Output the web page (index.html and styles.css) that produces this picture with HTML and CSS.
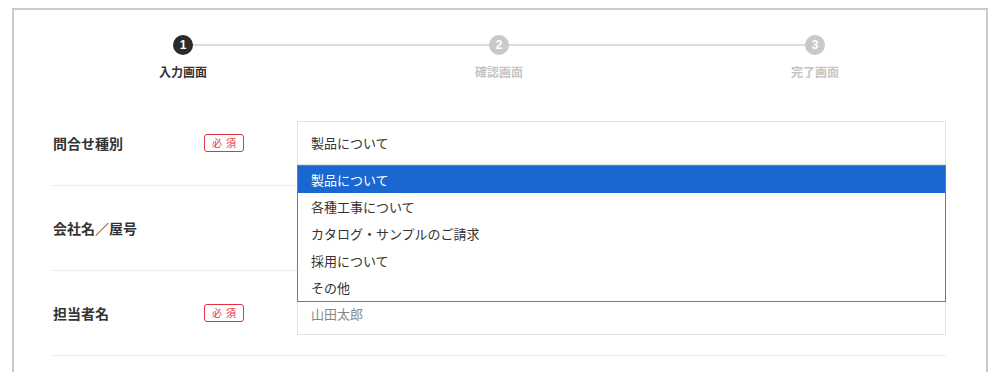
FILE: index.html
```html
<!DOCTYPE html>
<html lang="ja">
<head>
    <meta charset="UTF-8">
    <title>お問い合わせ</title>
    <link rel="stylesheet" href="styles.css">
</head>
<body>
    <div class="frame">
        <ol class="steps">
            <li class="step is-current">
                <span class="step-num">1</span>
                <span class="step-label">入力画面</span>
            </li>
            <li class="step">
                <span class="step-num">2</span>
                <span class="step-label">確認画面</span>
            </li>
            <li class="step">
                <span class="step-num">3</span>
                <span class="step-label">完了画面</span>
            </li>
        </ol>

        <form class="form">
            <div class="row">
                <div class="row-head">
                    <span class="row-label">問合せ種別</span>
                    <span class="badge">必須</span>
                </div>
                <div class="field select-wrap">
                    <div class="select">製品について</div>
                    <!-- 開いた状態のプルダウン -->
                    <ul class="options">
                        <li class="option is-selected">製品について</li>
                        <li class="option">各種工事について</li>
                        <li class="option">カタログ・サンプルのご請求</li>
                        <li class="option">採用について</li>
                        <li class="option">その他</li>
                    </ul>
                </div>
            </div>

            <div class="row">
                <div class="row-head">
                    <span class="row-label">会社名／屋号</span>
                </div>
                <div class="field">
                    <input type="text" class="input" placeholder="株式会社〇〇">
                </div>
            </div>

            <div class="row">
                <div class="row-head">
                    <span class="row-label">担当者名</span>
                    <span class="badge">必須</span>
                </div>
                <div class="field">
                    <input type="text" class="input" placeholder="山田太郎">
                </div>
            </div>
        </form>
    </div>
</body>
</html>
```

FILE: styles.css
```css
* {
    box-sizing: border-box;
}
body {
    margin: 8px 12px 0;
    background: #fff;
    font-family: "Noto Sans CJK JP", "Noto Sans", sans-serif;
    color: #333;
}
.frame {
    border: 2px solid #cbcbcb;
    border-bottom: none;
    padding: 0 40px 20px 38px;
    min-height: 400px;
}

/* ステップ表示 */
.steps {
    position: relative;
    list-style: none;
    margin: 0;
    padding: 25px 91px 20px;
    display: flex;
    justify-content: space-between;
}
.steps::before {
    content: "";
    position: absolute;
    top: 34px;
    left: 131px;
    right: 131px;
    height: 2px;
    background: #dcdcdc;
}
.step {
    position: relative;
    width: 80px;
    display: flex;
    flex-direction: column;
    align-items: center;
    gap: 8px;
}
.step-num {
    width: 20px;
    height: 20px;
    border-radius: 50%;
    background: #c9c9c9;
    color: #fff;
    font-family: "Liberation Sans", sans-serif;
    font-size: 12px;
    font-weight: 700;
    line-height: 20px;
    text-align: center;
}
.step-label {
    font-size: 12px;
    font-weight: 700;
    line-height: 18px;
    color: #c4c4c4;
}
.step.is-current .step-num {
    background: #2b2b2b;
}
.step.is-current .step-label {
    color: #333;
}

/* フォーム */
.row {
    display: flex;
    align-items: center;
    padding: 20px 0;
    border-bottom: 1px solid #ececec;
}
.row-head {
    width: 245px;
    flex-shrink: 0;
    display: flex;
    align-items: center;
}
.row-label {
    width: 152px;
    padding-left: 1px;
    font-size: 14px;
    font-weight: 700;
    color: #333;
}
.badge {
    width: 40px;
    height: 18px;
    border: 1px solid #e23346;
    border-radius: 3px;
    color: #e23346;
    font-size: 10px;
    line-height: 16px;
    text-align: center;
    letter-spacing: 4px;
    padding-left: 4px;
}
.field {
    flex: 1;
}
.select,
.input {
    display: block;
    width: 100%;
    height: 44px;
    border: 1px solid #e3e3e3;
    padding: 0 13px;
    font-family: inherit;
    font-size: 13px;
    color: #333;
    line-height: 42px;
    background: #fff;
}
.input::placeholder {
    color: #888;
}
.select-wrap {
    position: relative;
}
.options {
    position: absolute;
    top: 100%;
    left: 0;
    right: 0;
    z-index: 2;
    list-style: none;
    margin: 0;
    padding: 0;
    background: #fff;
    border: 1px solid #7a7a7a;
}
.option {
    height: 27px;
    line-height: 27px;
    padding: 0 13px;
    font-size: 13px;
    color: #333;
}
.option.is-selected {
    background: #1a67d2;
    color: #fff;
}
```
